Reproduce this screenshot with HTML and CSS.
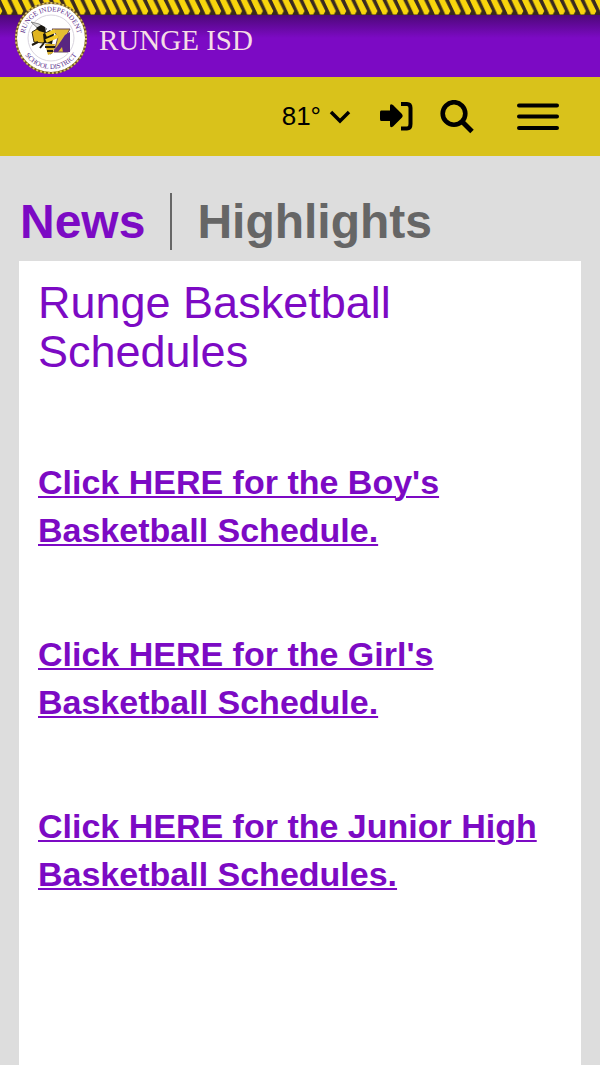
FILE: index.html
```html
<!DOCTYPE html>
<html lang="en">
<head>
<meta charset="utf-8">
<meta name="viewport" content="width=device-width, initial-scale=1">
<title>Runge ISD</title>
<link rel="stylesheet" href="styles.css">
</head>
<body>
<header>
  <svg class="rope" aria-hidden="true">
    <defs>
      <pattern id="twist" width="10.42" height="15" patternUnits="userSpaceOnUse" x="3">
        <rect width="10.42" height="15" fill="#3a2a20"/>
        <path id="strand" d="M-2.500 -1H3.800L9.800 11 8 14.500H4.500L3.500 12Z" fill="#f8d50c"/>
        <use href="#strand" x="10.42"/>
        <use href="#strand" x="-10.42"/>
      </pattern>
    </defs>
    <rect width="100%" height="15" fill="url(#twist)"/>
  </svg>
  <a class="brand" href="#">
    <svg class="seal" viewBox="0 0 74 74" aria-hidden="true">
      <circle cx="37" cy="37" r="35" fill="#fff" stroke="#71581f" stroke-width="2"/>
      <circle cx="37" cy="37" r="35" fill="none" stroke="#d6bd68" stroke-width="2" stroke-dasharray="2 2"/>
      <circle cx="37" cy="37" r="23" fill="#fff" stroke="#d9d4de" stroke-width="1"/>
      <path id="upper" d="M12 46A26.600 26.600 0 1 1 62 46" fill="none"/>
      <path id="lower" d="M6 37A31 31 0 0 0 68 37" fill="none"/>
      <text class="seal-text"><textPath href="#upper" startOffset="50%" text-anchor="middle">RUNGE INDEPENDENT</textPath></text>
      <text class="seal-text"><textPath href="#lower" startOffset="50%" text-anchor="middle">SCHOOL DISTRICT</textPath></text>
      <path d="M38 28H56L51 37 54 51H40L44 36Z" fill="#e4bd32" stroke="#6b4a55"/>
      <path d="M51 34 56 31V51H49L48 46 44 51H39L47 40Z" fill="#592681"/>
      <path d="M17 21 25 23 33 28 28 31Z" fill="#ddd" stroke="#888"/>
      <path d="M18 31 23 28 30 30 34 37 29 42 20 41Z" fill="#e0b520" stroke="#3b3015"/>
      <path d="M22 27 27 24 31 26 32 32 25 30Z M29 33 36 29 40 33 38 43 30 42Z" fill="#17150f"/>
      <path d="M32 34 41 30 M32 40 44 35" stroke="#f3cb28" stroke-width="4"/>
      <path d="M24 41 18 44 M30 42 26 47 M38 43 34 48 37 53" fill="none" stroke="#211b12" stroke-width="2"/>
      <path d="M31 43H41L39 52 34 54Z" fill="#d8ae26"/>
      <path d="M31 46H41M33 50H39" stroke="#211b12" stroke-width="2"/>
    </svg>
    <span class="brand-name">RUNGE ISD</span>
  </a>
</header>
<nav class="toolbar" aria-label="Site tools">
  <button class="weather" type="button">81°
    <svg width="22" height="14" viewBox="0 0 22 14" aria-hidden="true"><path d="M2 2 11 11 20 2" fill="none" stroke="#000" stroke-width="3.500"/></svg>
  </button>
  <button class="login" type="button" aria-label="Sign in">
    <svg width="34" height="30" viewBox="0 0 34 30" aria-hidden="true"><path d="M2 8.500H11V4Q11 1 14 3L23 12Q24.500 14 23 15.500L14 24.500Q11 26.500 11 23V19H2Q1 19 1 17V10.500Q1 8.500 2 8.500Z"/><path d="M22 2H28Q31.500 2 31.500 6V22Q31.500 26.500 28 26.500H22" fill="none" stroke="#000" stroke-width="4"/></svg>
  </button>
  <button class="search" type="button" aria-label="Search">
    <svg width="34" height="34" viewBox="0 0 34 34" aria-hidden="true"><circle cx="14" cy="13.500" r="11.300" fill="none" stroke="#000" stroke-width="4.600"/><path d="M22 21.500 32 31.500" stroke="#000" stroke-width="5"/></svg>
  </button>
  <button class="menu" type="button" aria-label="Menu">
    <svg width="42" height="28" viewBox="0 0 42 28" aria-hidden="true"><path d="M2 2.500H40M2 13.500H40M2 25H40" stroke="#000" stroke-width="4" stroke-linecap="round"/></svg>
  </button>
</nav>
<main>
  <div class="tabs">
    <button class="tab active" type="button">News</button>
    <button class="tab" type="button">Highlights</button>
  </div>
  <article class="card">
    <h1>Runge Basketball Schedules</h1>
    <p><a href="#">Click HERE for the Boy's Basketball Schedule.</a></p>
    <p><a href="#">Click HERE for the Girl's Basketball Schedule.</a></p>
    <p><a href="#">Click HERE for the Junior High Basketball Schedules.</a></p>
  </article>
</main>
</body>
</html>
```
FILE: styles.css
```css
* { box-sizing: border-box; }
body {
  margin: 0;
  min-height: 100vh;
  display: flex;
  flex-direction: column;
  background: #ddd;
  font-family: "Liberation Sans", Arial, sans-serif;
}
button {
  border: 0;
  padding: 0;
  background: none;
  color: inherit;
  font: inherit;
  cursor: pointer;
}
svg { display: block; }
header {
  position: relative;
  background: linear-gradient(#4b0875 14px, #7c0ac4 38px);
}
.rope {
  position: absolute;
  inset: 0 0 auto;
  width: 100%;
  height: 15px;
}
.brand {
  position: relative;
  display: flex;
  align-items: center;
  gap: 11px;
  padding: 1px 14px 2px;
  color: #f5dce6;
  text-decoration: none;
}
.seal { width: 74px; height: 74px; }
.seal-text {
  font: 7px "Liberation Serif", serif;
  fill: #5d318c;
}
.brand-name {
  padding-top: 4px;
  font: 29px/32px "Liberation Serif", serif;
}
.toolbar {
  display: flex;
  align-items: center;
  justify-content: flex-end;
  height: 79px;
  padding-right: 41px;
  background: #d9c21b;
}
.weather {
  display: flex;
  align-items: center;
  gap: 8px;
  margin-right: 28px;
  font-size: 26px;
}
.login { margin-right: 27px; }
.search { margin-right: 43px; }
main {
  flex: 1;
  display: flex;
  flex-direction: column;
  padding: 37px 19px 0;
}
.tabs { display: flex; }
.tab {
  padding: 0 25px;
  color: #666;
  font-size: 48px;
  font-weight: bold;
  line-height: 57px;
}
.tab.active {
  padding-left: 1px;
  border-right: 2px solid #666;
  color: #7c0ac4;
}
.card {
  flex: 1;
  margin-top: 11px;
  padding: 17px 19px;
  background: #fff;
  color: #7c0ac4;
}
h1 {
  margin: 0 0 82px;
  font-size: 45px;
  font-weight: normal;
  line-height: 49px;
}
p {
  margin: 0 0 76px;
  font-size: 34px;
  font-weight: bold;
  line-height: 48px;
}
a { color: inherit; }
p a {
  text-decoration-thickness: 2px;
  text-underline-offset: 2px;
}
```
